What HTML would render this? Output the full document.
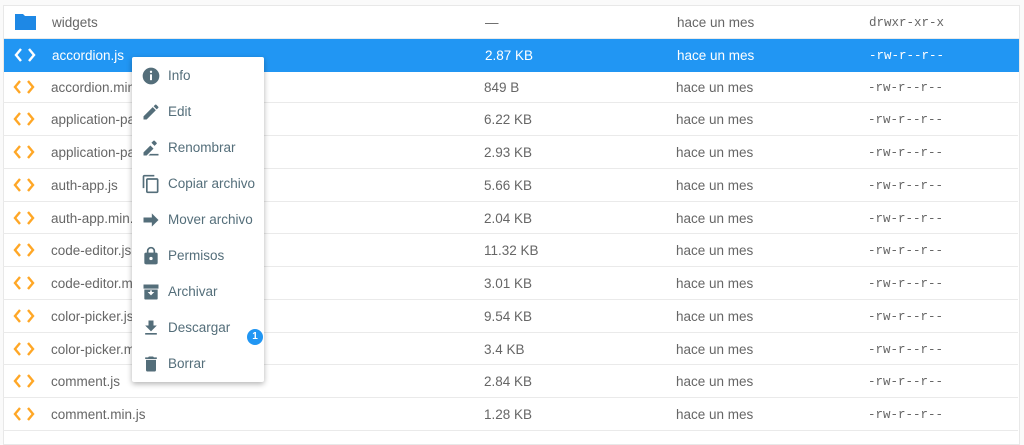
<!DOCTYPE html>
<html><head><meta charset="utf-8"><style>
*{margin:0;padding:0;box-sizing:border-box}
body{width:1024px;height:435px;background:#fafafa;font-family:"Liberation Sans",sans-serif;position:relative;overflow:hidden}
.tbl{position:absolute;left:3px;top:5px;width:1017px;height:440px;background:#fff;border:1px solid #e8e8e8}
.row{position:absolute;left:0;width:1015px;height:32.75px;border-bottom:1px solid #eaeaea;font-size:13.5px;color:#666}
.row span{position:absolute;top:0;line-height:34px;white-space:nowrap}
.n{left:48px}.s{left:481px}.d{left:673px}.p{left:865px;font-family:"Liberation Mono",monospace;font-size:12.5px}
.sel{background:#2196f3;color:#fff;border-bottom-color:#2196f3}
.ic{position:absolute;left:9px;top:8px}
.menu{position:absolute;left:132px;top:57px;width:132px;height:325px;background:#fff;box-shadow:0 2px 6px rgba(0,0,0,.3);border-radius:2px;z-index:5}
.mi{position:absolute;left:0;width:132px;height:36px;font-size:13.5px;color:#546e7a}
.mi span{position:absolute;left:36px;line-height:38px}
.mi svg{position:absolute;left:9px;top:9px}
.badge{position:absolute;left:247px;top:329px;width:16px;height:16px;border-radius:50%;background:#2196f3;color:#fff;font-size:10px;font-weight:bold;text-align:center;line-height:16px;z-index:6}
</style></head><body>
<div class="tbl">
<div class="row" style="top:0"><svg class="ic" width="24" height="18" viewBox="0 0 24 18" style="top:7px;left:10px"><path d="M1 1h8l2 2h11v14H1z" fill="#1e88e5"/></svg><span class="n">widgets</span><span class="s">—</span><span class="d">hace un mes</span><span class="p">drwxr-xr-x</span></div>
<div class="row sel" style="top:32.75px"><svg class="ic" width="24" height="16" viewBox="0 0 24 16"><path d="M8 2L3 8l5 6M16 2l5 6-5 6" stroke="#fff" stroke-width="2.4" fill="none"/></svg><span class="n">accordion.js</span><span class="s">2.87 KB</span><span class="d">hace un mes</span><span class="p">-rw-r--r--</span></div>
</div>
<div class="menu">
<div class="mi" style="top:0"><svg width="20" height="20" viewBox="0 0 24 24"><circle cx="12" cy="12" r="10" fill="#546e7a"/><rect x="10.8" y="10" width="2.4" height="7" fill="#fff"/><circle cx="12" cy="7" r="1.4" fill="#fff"/></svg><span>Info</span></div>
<div class="mi" style="top:36px"><svg width="20" height="20" viewBox="0 0 24 24"><path d="M3 17.25V21h3.75L17.81 9.94l-3.75-3.75L3 17.25zM20.71 7.04a1 1 0 000-1.41l-2.34-2.34a1 1 0 00-1.41 0l-1.830 1.83 3.75 3.75 1.83-1.83z" fill="#546e7a"/></svg><span>Edit</span></div>
<div class="mi" style="top:72px"><svg width="20" height="20" viewBox="0 0 24 24"><path d="M3 17.25V21h3.75L15 12.75 11.25 9 3 17.25zM18.7 7.04a1 1 0 000-1.41L16.37 3.3a1 1 0 00-1.41 0L12.5 5.75l3.75 3.75zM11 19h10v2H9z" fill="#546e7a"/></svg><span>Renombrar</span></div>
<div class="mi" style="top:108px"><svg width="20" height="20" viewBox="0 0 24 24"><path d="M16 1H4c-1.1 0-2 .9-2 2v14h2V3h12V1zm3 4H8c-1.1 0-2 .9-2 2v14c0 1.1.9 2 2 2h11c1.1 0 2-.9 2-2V7c0-1.1-.9-2-2-2zm0 16H8V7h11v14z" fill="#546e7a"/></svg><span>Copiar archivo</span></div>
<div class="mi" style="top:144px"><svg width="20" height="20" viewBox="0 0 24 24"><path d="M3 9h10V4l8 8-8 8v-5H3z" fill="#546e7a"/></svg><span>Mover archivo</span></div>
<div class="mi" style="top:180px"><svg width="20" height="20" viewBox="0 0 24 24"><path d="M18 8h-1V6A5 5 0 007 6v2H6a2 2 0 00-2 2v10a2 2 0 002 2h12a2 2 0 002-2V10a2 2 0 00-2-2zM9 6a3 3 0 016 0v2H9zm3 11a2 2 0 110-4 2 2 0 010 4z" fill="#546e7a"/></svg><span>Permisos</span></div>
<div class="mi" style="top:216px"><svg width="20" height="20" viewBox="0 0 24 24"><path d="M3 3h18v5H3zM4 9h16v11a1 1 0 01-1 1H5a1 1 0 01-1-1z" fill="#546e7a"/><path d="M8 12l4 4 4-4h-3v-2h-2v2z" fill="#fff"/></svg><span>Archivar</span></div>
<div class="mi" style="top:252px"><svg width="20" height="20" viewBox="0 0 24 24"><path d="M19 9h-4V3H9v6H5l7 7 7-7zM5 18v2h14v-2z" fill="#546e7a"/></svg><span>Descargar</span></div>
<div class="mi" style="top:288px"><svg width="20" height="20" viewBox="0 0 24 24"><path d="M6 19a2 2 0 002 2h8a2 2 0 002-2V7H6zM19 4h-3.5l-1-1h-5l-1 1H5v2h14z" fill="#546e7a"/></svg><span>Borrar</span></div>
</div>
<div class="badge">1</div>
<div style="position:absolute;left:3px;top:5px;width:1017px;z-index:1">
<div class="row" style="top:65.5px"><svg class="ic" width="24" height="16" viewBox="0 0 24 16"><path d="M8 2L3 8l5 6M16 2l5 6-5 6" stroke="#ffa726" stroke-width="2.4" fill="none"/></svg><span class="n">accordion.min.js</span><span class="s">849 B</span><span class="d">hace un mes</span><span class="p">-rw-r--r--</span></div>
<div class="row" style="top:98.25px"><svg class="ic" width="24" height="16" viewBox="0 0 24 16"><path d="M8 2L3 8l5 6M16 2l5 6-5 6" stroke="#ffa726" stroke-width="2.4" fill="none"/></svg><span class="n">application-panel.js</span><span class="s">6.22 KB</span><span class="d">hace un mes</span><span class="p">-rw-r--r--</span></div>
<div class="row" style="top:131px"><svg class="ic" width="24" height="16" viewBox="0 0 24 16"><path d="M8 2L3 8l5 6M16 2l5 6-5 6" stroke="#ffa726" stroke-width="2.4" fill="none"/></svg><span class="n">application-panel.min.js</span><span class="s">2.93 KB</span><span class="d">hace un mes</span><span class="p">-rw-r--r--</span></div>
<div class="row" style="top:163.75px"><svg class="ic" width="24" height="16" viewBox="0 0 24 16"><path d="M8 2L3 8l5 6M16 2l5 6-5 6" stroke="#ffa726" stroke-width="2.4" fill="none"/></svg><span class="n">auth-app.js</span><span class="s">5.66 KB</span><span class="d">hace un mes</span><span class="p">-rw-r--r--</span></div>
<div class="row" style="top:196.5px"><svg class="ic" width="24" height="16" viewBox="0 0 24 16"><path d="M8 2L3 8l5 6M16 2l5 6-5 6" stroke="#ffa726" stroke-width="2.4" fill="none"/></svg><span class="n">auth-app.min.js</span><span class="s">2.04 KB</span><span class="d">hace un mes</span><span class="p">-rw-r--r--</span></div>
<div class="row" style="top:229.25px"><svg class="ic" width="24" height="16" viewBox="0 0 24 16"><path d="M8 2L3 8l5 6M16 2l5 6-5 6" stroke="#ffa726" stroke-width="2.4" fill="none"/></svg><span class="n">code-editor.js</span><span class="s">11.32 KB</span><span class="d">hace un mes</span><span class="p">-rw-r--r--</span></div>
<div class="row" style="top:262px"><svg class="ic" width="24" height="16" viewBox="0 0 24 16"><path d="M8 2L3 8l5 6M16 2l5 6-5 6" stroke="#ffa726" stroke-width="2.4" fill="none"/></svg><span class="n">code-editor.min.js</span><span class="s">3.01 KB</span><span class="d">hace un mes</span><span class="p">-rw-r--r--</span></div>
<div class="row" style="top:294.75px"><svg class="ic" width="24" height="16" viewBox="0 0 24 16"><path d="M8 2L3 8l5 6M16 2l5 6-5 6" stroke="#ffa726" stroke-width="2.4" fill="none"/></svg><span class="n">color-picker.js</span><span class="s">9.54 KB</span><span class="d">hace un mes</span><span class="p">-rw-r--r--</span></div>
<div class="row" style="top:327.5px"><svg class="ic" width="24" height="16" viewBox="0 0 24 16"><path d="M8 2L3 8l5 6M16 2l5 6-5 6" stroke="#ffa726" stroke-width="2.4" fill="none"/></svg><span class="n">color-picker.min.js</span><span class="s">3.4 KB</span><span class="d">hace un mes</span><span class="p">-rw-r--r--</span></div>
<div class="row" style="top:360.25px"><svg class="ic" width="24" height="16" viewBox="0 0 24 16"><path d="M8 2L3 8l5 6M16 2l5 6-5 6" stroke="#ffa726" stroke-width="2.4" fill="none"/></svg><span class="n">comment.js</span><span class="s">2.84 KB</span><span class="d">hace un mes</span><span class="p">-rw-r--r--</span></div>
<div class="row" style="top:393px"><svg class="ic" width="24" height="16" viewBox="0 0 24 16"><path d="M8 2L3 8l5 6M16 2l5 6-5 6" stroke="#ffa726" stroke-width="2.4" fill="none"/></svg><span class="n">comment.min.js</span><span class="s">1.28 KB</span><span class="d">hace un mes</span><span class="p">-rw-r--r--</span></div>
</div>
</body></html>
